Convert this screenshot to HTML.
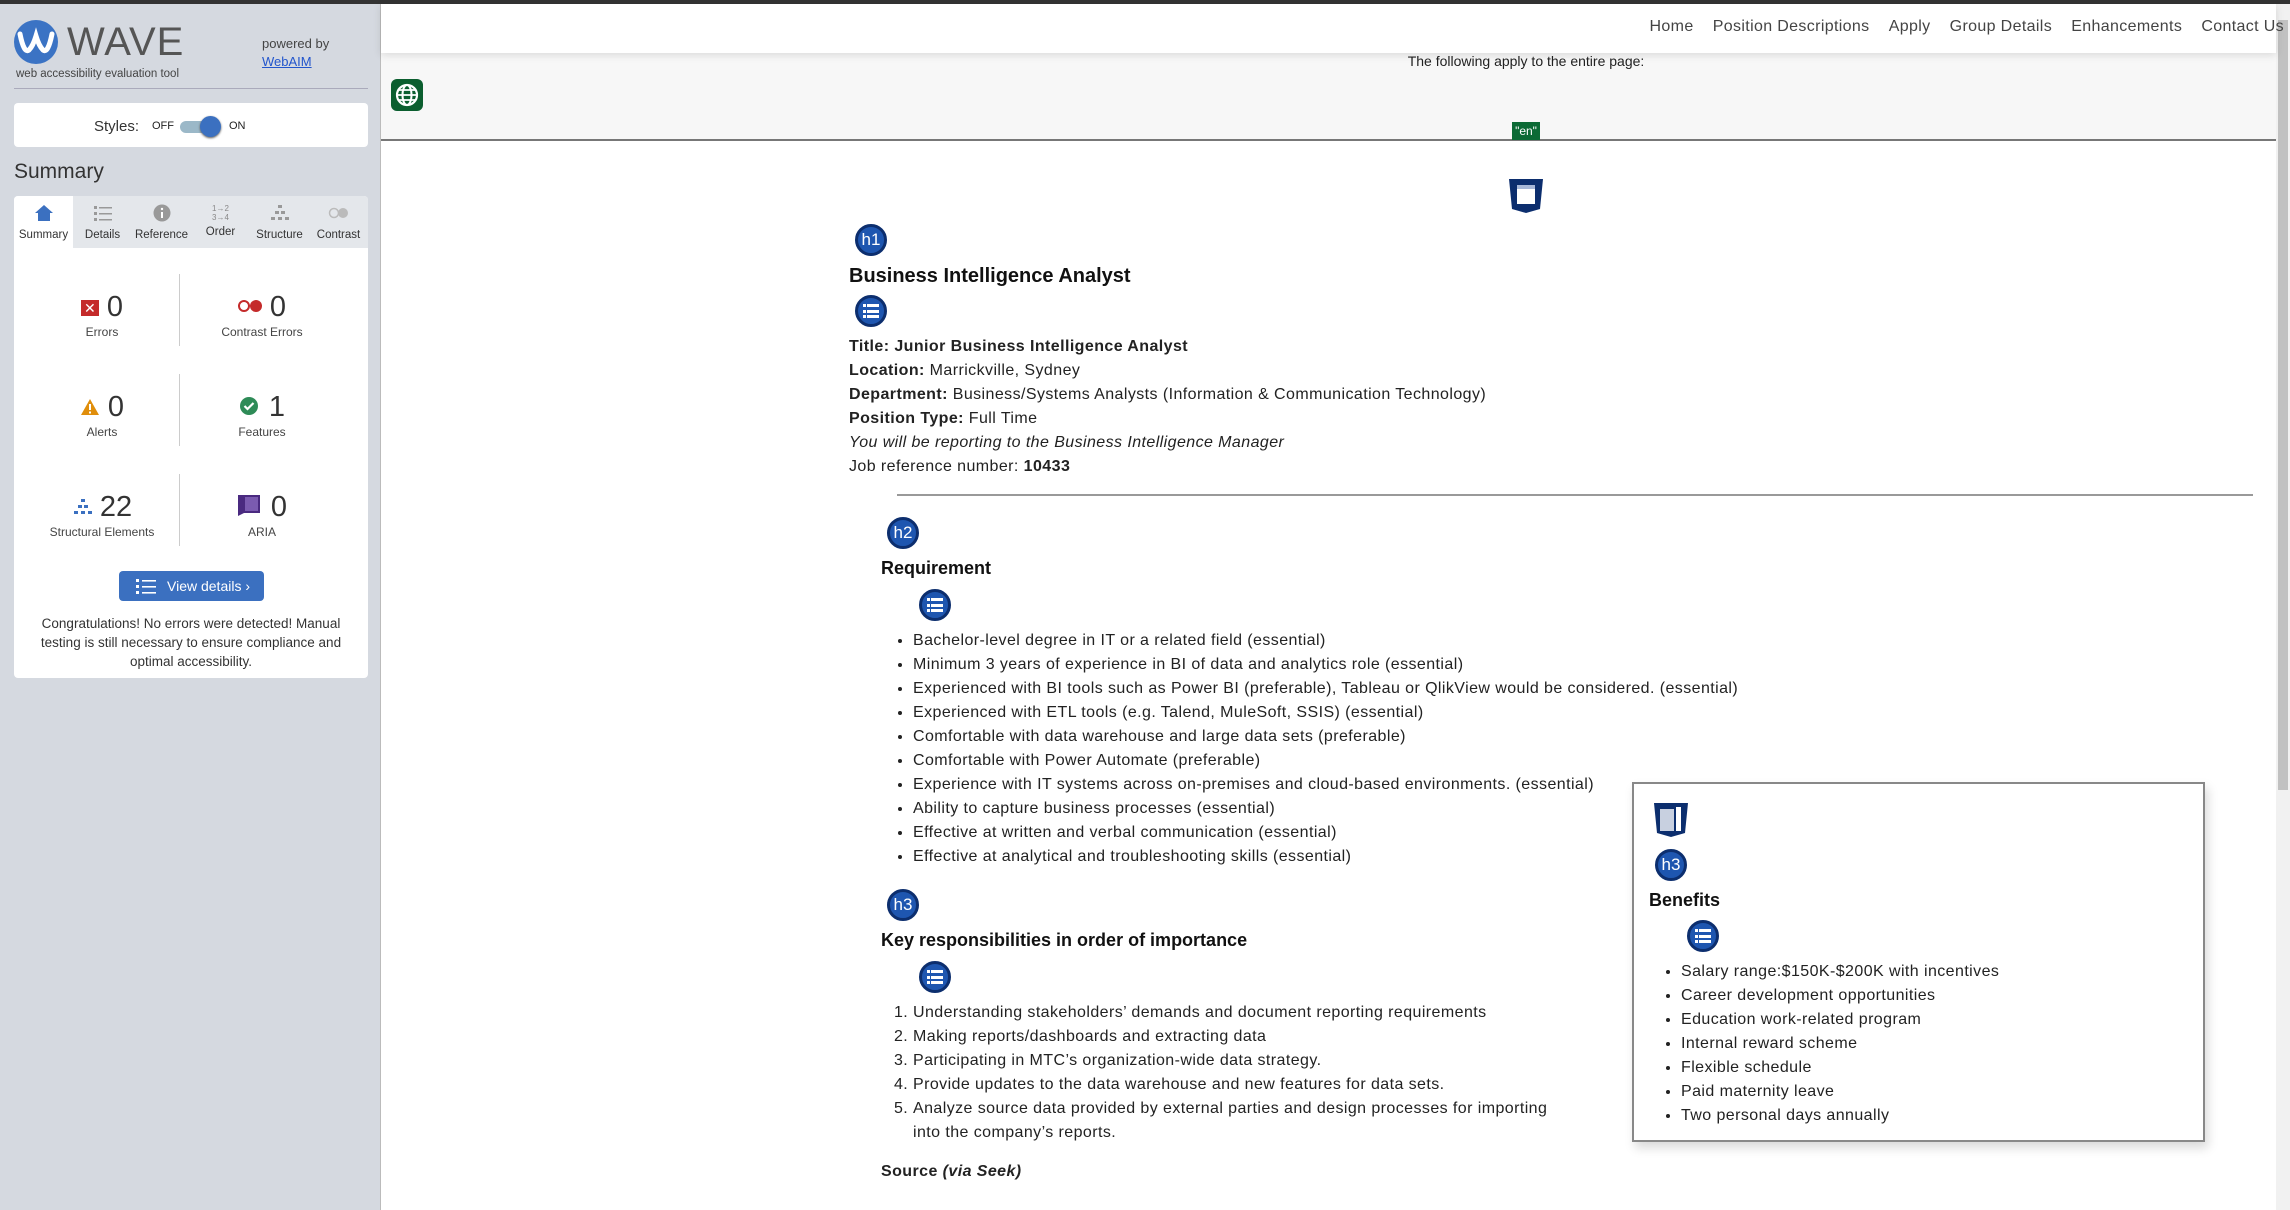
<!DOCTYPE html>
<html><head><meta charset="utf-8">
<style>
*{margin:0;padding:0;box-sizing:border-box}
body{width:2290px;height:1210px;overflow:hidden;font-family:"Liberation Sans",sans-serif;background:#fff;position:relative;color:#111}
.a{position:absolute}
#top{left:0;top:0;width:2290px;height:4px;background:#333}
#side{left:0;top:4px;width:381px;height:1206px;background:#d5d9e0;border-right:1px solid #bbb}
.ic{position:absolute;width:32px;height:32px;border-radius:50%;background:#1e56b0;border:3px solid #0c2e6e;color:#fff;font-size:17px;text-align:center;line-height:26px}
.li{position:absolute;width:32px;height:32px;border-radius:50%;background:#1e56b0;border:3px solid #0c2e6e}
.li i{position:absolute;left:9px;width:12px;height:3px;background:#fff}
.li b{position:absolute;left:5px;width:3px;height:3px;background:#fff}
.t{font-size:16px;line-height:24px;color:#222;letter-spacing:0.42px}
ul.t,ol.t{position:absolute}
.stat{position:absolute;text-align:center;width:160px}
.num{font-size:29px;color:#333;line-height:32px}
.lab{font-size:12px;color:#444;margin-top:2px}
.tab{position:absolute;top:8px;width:59px;text-align:center;font-size:11.5px;color:#333}
.tab div{margin-top:4px}
</style></head><body>
<div id="top" class="a"></div>
<div id="side" class="a">
  <svg class="a" style="left:14px;top:16px" width="44" height="44" viewBox="0 0 44 44"><circle cx="22" cy="22" r="22" fill="#3b73c4"/><path d="M6 14 Q10 34 15 30 Q19 26 22 16 Q25 26 29 30 Q34 34 38 14" stroke="#fff" stroke-width="5" fill="none" stroke-linecap="round"/></svg>
  <div class="a" style="left:67px;top:16px;font-size:40px;color:#555;letter-spacing:1px">WAVE</div>
  <div class="a" style="left:16px;top:64px;font-size:11.5px;color:#444">web accessibility evaluation tool</div>
  <div class="a" style="left:262px;top:32px;font-size:13px;color:#444">powered by</div>
  <div class="a" style="left:262px;top:50px;font-size:13px;color:#2255cc;text-decoration:underline">WebAIM</div>
  <div class="a" style="left:14px;top:84px;width:354px;height:1px;background:#aab"></div>
  <div class="a" style="left:14px;top:99px;width:354px;height:44px;background:#fff;border-radius:4px">
    <span class="a" style="left:80px;top:15px;font-size:15px;color:#333">Styles:</span>
    <span class="a" style="left:138px;top:17px;font-size:11px;color:#222">OFF</span>
    <span class="a" style="left:166px;top:18px;width:40px;height:12px;border-radius:6px;background:#9bb8c8"></span>
    <span class="a" style="left:186px;top:13px;width:21px;height:21px;border-radius:50%;background:#3b70c0;box-shadow:0 1px 2px #555"></span>
    <span class="a" style="left:215px;top:17px;font-size:11px;color:#222">ON</span>
  </div>
  <div class="a" style="left:14px;top:156px;font-size:21px;color:#333">Summary</div>
  <div class="a" style="left:14px;top:192px;width:354px;height:482px;background:#fff;border-radius:4px;overflow:hidden">
    <div class="a" style="left:0;top:0;width:354px;height:52px;background:#e4e7eb"></div>
    <div class="a" style="left:0;top:0;width:59px;height:52px;background:#fff"></div>
    <div class="tab" style="left:0"><svg width="20" height="18" viewBox="0 0 20 18"><path d="M10 1 L19 9 H16 V17 H4 V9 H1Z" fill="#3b70c0"/></svg><div>Summary</div></div>
    <div class="tab" style="left:59px"><svg width="20" height="18" viewBox="0 0 20 18"><g fill="#999"><rect x="1" y="2" width="3" height="3"/><rect x="6" y="3" width="13" height="1.5"/><rect x="1" y="8" width="3" height="3"/><rect x="6" y="9" width="13" height="1.5"/><rect x="1" y="14" width="3" height="3"/><rect x="6" y="15" width="13" height="1.5"/></g></svg><div>Details</div></div>
    <div class="tab" style="left:118px"><svg width="20" height="18" viewBox="0 0 20 18"><circle cx="10" cy="9" r="8.5" fill="#999"/><rect x="9" y="8" width="2" height="6" fill="#fff"/><circle cx="10" cy="5" r="1.2" fill="#fff"/></svg><div>Reference</div></div>
    <div class="tab" style="left:177px"><div style="font-size:8px;line-height:9px;color:#888;height:18px;margin-top:0">1→2<br>3→4</div><div>Order</div></div>
    <div class="tab" style="left:236px"><svg width="20" height="18" viewBox="0 0 20 18"><g fill="#999"><rect x="8" y="1" width="4" height="3"/><rect x="5" y="7" width="4" height="3"/><rect x="11" y="7" width="4" height="3"/><rect x="1" y="13" width="4" height="3"/><rect x="8" y="13" width="4" height="3"/><rect x="15" y="13" width="4" height="3"/></g></svg><div>Structure</div></div>
    <div class="tab" style="left:295px"><svg width="22" height="18" viewBox="0 0 22 18"><circle cx="6" cy="9" r="4.5" fill="none" stroke="#bbb" stroke-width="1.5"/><circle cx="15" cy="9" r="5" fill="#bbb"/></svg><div>Contrast</div></div>
    <div class="a" style="left:165px;top:78px;width:1px;height:72px;background:#ccc"></div>
    <div class="a" style="left:165px;top:178px;width:1px;height:72px;background:#ccc"></div>
    <div class="a" style="left:165px;top:278px;width:1px;height:72px;background:#ccc"></div>
    <div class="stat" style="left:8px;top:95px"><div class="num"><span style="display:inline-block;width:18px;height:16px;background:#c42a2a;color:#fff;font-size:14px;line-height:16px;vertical-align:3px;margin-right:8px">✕</span>0</div><div class="lab">Errors</div></div>
    <div class="stat" style="left:168px;top:95px"><div class="num"><span style="display:inline-block;width:12px;height:12px;border:2px solid #c42a2a;border-radius:50%;vertical-align:4px"></span><span style="display:inline-block;width:12px;height:12px;background:#c42a2a;border-radius:50%;vertical-align:4px;margin-right:8px"></span>0</div><div class="lab">Contrast Errors</div></div>
    <div class="stat" style="left:8px;top:195px"><div class="num"><svg width="20" height="18" viewBox="0 0 20 18" style="vertical-align:0;margin-right:8px"><path d="M10 1 L19 17 H1Z" fill="#e08e0b"/><rect x="9" y="6" width="2" height="6" fill="#fff"/><rect x="9" y="13.5" width="2" height="2" fill="#fff"/></svg>0</div><div class="lab">Alerts</div></div>
    <div class="stat" style="left:168px;top:195px"><div class="num"><svg width="20" height="20" viewBox="0 0 20 20" style="vertical-align:0;margin-right:10px"><circle cx="10" cy="10" r="9" fill="#2e8b57"/><path d="M5.5 10 L8.5 13 L14.5 7" stroke="#fff" stroke-width="2.2" fill="none"/></svg>1</div><div class="lab">Features</div></div>
    <div class="stat" style="left:8px;top:295px"><div class="num"><svg width="22" height="18" viewBox="0 0 20 18" style="vertical-align:0;margin-right:6px"><g fill="#3b70c0"><rect x="8" y="1" width="4" height="3"/><rect x="5" y="7" width="4" height="3"/><rect x="11" y="7" width="4" height="3"/><rect x="1" y="13" width="4" height="3"/><rect x="8" y="13" width="4" height="3"/><rect x="15" y="13" width="4" height="3"/></g></svg>22</div><div class="lab">Structural Elements</div></div>
    <div class="stat" style="left:168px;top:295px"><div class="num"><svg width="24" height="24" viewBox="0 0 24 24" style="vertical-align:-1px;margin-right:10px"><path d="M1 2 H23 V20 H7 L1 23Z" fill="#4a2a80"/><rect x="8" y="4" width="13" height="14" fill="#7b5bb0"/></svg>0</div><div class="lab">ARIA</div></div>
    <div class="a" style="left:105px;top:375px;width:145px;height:30px;background:#3b70c0;border-radius:4px;color:#fff;font-size:14px;line-height:30px;padding-left:48px">View details ›</div>
    <svg class="a" style="left:122px;top:382px" width="20" height="16" viewBox="0 0 20 16"><g fill="#fff"><rect x="0" y="1" width="3" height="3"/><rect x="6" y="2" width="14" height="1.6"/><rect x="0" y="7" width="3" height="3"/><rect x="6" y="8" width="14" height="1.6"/><rect x="0" y="13" width="3" height="3"/><rect x="6" y="14" width="14" height="1.6"/></g></svg>
    <div class="a" style="left:8px;top:418px;width:338px;text-align:center;font-size:13.5px;line-height:19px;color:#333">Congratulations! No errors were detected! Manual testing is still necessary to ensure compliance and optimal accessibility.</div>
  </div>
</div>

<!-- header -->
<div class="a" style="left:381px;top:4px;width:1895px;height:49px;background:#fff;box-shadow:0 2px 8px rgba(0,0,0,.12);z-index:2"></div>
<div class="a" style="left:1560px;top:18px;width:724px;text-align:right;font-size:16px;color:#444;letter-spacing:0.35px;z-index:3">
<span>Home</span>&nbsp;&nbsp;&nbsp;&nbsp;<span>Position Descriptions</span>&nbsp;&nbsp;&nbsp;&nbsp;<span>Apply</span>&nbsp;&nbsp;&nbsp;&nbsp;<span>Group Details</span>&nbsp;&nbsp;&nbsp;&nbsp;<span>Enhancements</span>&nbsp;&nbsp;&nbsp;&nbsp;<span>Contact Us</span></div>
<div class="a" style="left:381px;top:53px;width:1895px;height:88px;background:#f7f7f7;border-bottom:2px solid #777"></div>
<div class="a" style="left:1226px;top:53px;width:600px;text-align:center;font-size:14px;color:#222;line-height:16px">The following apply to the entire page:</div>
<svg class="a" style="left:391px;top:79px" width="32" height="32" viewBox="0 0 32 32"><rect width="32" height="32" rx="6" fill="#0b5e2f"/><circle cx="16" cy="16" r="10" fill="none" stroke="#fff" stroke-width="2.2"/><ellipse cx="16" cy="16" rx="4.5" ry="10" fill="none" stroke="#fff" stroke-width="2"/><path d="M6 16 H26 M8 11 H24 M8 21 H24" stroke="#fff" stroke-width="1.8"/></svg>
<div class="a" style="left:1512px;top:122px;width:28px;height:18px;background:#0b6a35;color:#fff;font-size:12px;text-align:center;line-height:18px">"en"</div>

<!-- scrollbar -->
<div class="a" style="left:2276px;top:4px;width:14px;height:1206px;background:#f1f1f1"></div>
<div class="a" style="left:2278px;top:20px;width:10px;height:770px;background:#c1c1c1"></div>

<!-- main icons -->
<svg class="a" style="left:1508px;top:178px" width="36" height="36" viewBox="0 0 36 36"><path d="M1 1 H35 L32 31 L18 35 L4 31Z" fill="#0c2e6e"/><rect x="9" y="7" width="18" height="19" fill="#fff"/><rect x="9" y="7" width="18" height="4" fill="#a8b8d8"/></svg>
<div class="ic" style="left:855px;top:224px">h1</div>
<div class="a" style="left:849px;top:265px;font-size:20px;font-weight:bold;color:#111">Business Intelligence Analyst</div>
<div class="li" style="left:855px;top:295px"><b style="top:6px"></b><i style="top:6px"></i><b style="top:11.5px"></b><i style="top:11.5px"></i><b style="top:17px"></b><i style="top:17px"></i></div>
<div class="a t" style="left:849px;top:335px">
<div><b>Title: Junior Business Intelligence Analyst</b></div>
<div><b>Location:</b> Marrickville, Sydney</div>
<div><b>Department:</b> Business/Systems Analysts (Information &amp; Communication Technology)</div>
<div><b>Position Type:</b> Full Time</div>
<div><i>You will be reporting to the Business Intelligence Manager</i></div>
<div>Job reference number: <b>10433</b></div>
</div>
<div class="a" style="left:897px;top:494px;width:1356px;height:2px;background:#999"></div>
<div class="ic" style="left:887px;top:517px">h2</div>
<div class="a" style="left:881px;top:558px;font-size:18px;font-weight:bold;color:#111">Requirement</div>
<div class="li" style="left:919px;top:589px"><b style="top:6px"></b><i style="top:6px"></i><b style="top:11.5px"></b><i style="top:11.5px"></i><b style="top:17px"></b><i style="top:17px"></i></div>
<ul class="t" style="left:913px;top:629px">
<li>Bachelor-level degree in IT or a related field (essential)</li>
<li>Minimum 3 years of experience in BI of data and analytics role (essential)</li>
<li>Experienced with BI tools such as Power BI (preferable), Tableau or QlikView would be considered. (essential)</li>
<li>Experienced with ETL tools (e.g. Talend, MuleSoft, SSIS) (essential)</li>
<li>Comfortable with data warehouse and large data sets (preferable)</li>
<li>Comfortable with Power Automate (preferable)</li>
<li>Experience with IT systems across on-premises and cloud-based environments. (essential)</li>
<li>Ability to capture business processes (essential)</li>
<li>Effective at written and verbal communication (essential)</li>
<li>Effective at analytical and troubleshooting skills (essential)</li>
</ul>
<div class="ic" style="left:887px;top:889px">h3</div>
<div class="a" style="left:881px;top:930px;font-size:18px;font-weight:bold;color:#111">Key responsibilities in order of importance</div>
<div class="li" style="left:919px;top:961px"><b style="top:6px"></b><i style="top:6px"></i><b style="top:11.5px"></b><i style="top:11.5px"></i><b style="top:17px"></b><i style="top:17px"></i></div>
<ol class="t" style="left:913px;top:1001px;width:650px">
<li>Understanding stakeholders’ demands and document reporting requirements</li>
<li>Making reports/dashboards and extracting data</li>
<li>Participating in MTC’s organization-wide data strategy.</li>
<li>Provide updates to the data warehouse and new features for data sets.</li>
<li>Analyze source data provided by external parties and design processes for importing into the company’s reports.</li>
</ol>
<div class="a t" style="left:881px;top:1160px;font-weight:bold">Source <i>(via Seek)</i></div>

<!-- benefits box -->
<div class="a" style="left:1632px;top:782px;width:573px;height:360px;border:2px solid #888;background:#fff;box-shadow:3px 6px 10px rgba(0,0,0,.15)"></div>
<svg class="a" style="left:1653px;top:802px" width="36" height="36" viewBox="0 0 36 36"><path d="M1 1 H35 L32 31 L18 35 L4 31Z" fill="#0c2e6e"/><rect x="7" y="7" width="14" height="22" fill="#c8d0e0"/><rect x="23" y="5" width="5" height="24" fill="#fff"/></svg>
<div class="ic" style="left:1655px;top:849px">h3</div>
<div class="a" style="left:1649px;top:890px;font-size:18px;font-weight:bold;color:#111">Benefits</div>
<div class="li" style="left:1687px;top:920px"><b style="top:6px"></b><i style="top:6px"></i><b style="top:11.5px"></b><i style="top:11.5px"></i><b style="top:17px"></b><i style="top:17px"></i></div>
<ul class="t" style="left:1681px;top:960px">
<li>Salary range:$150K-$200K with incentives</li>
<li>Career development opportunities</li>
<li>Education work-related program</li>
<li>Internal reward scheme</li>
<li>Flexible schedule</li>
<li>Paid maternity leave</li>
<li>Two personal days annually</li>
</ul>
</body></html>
